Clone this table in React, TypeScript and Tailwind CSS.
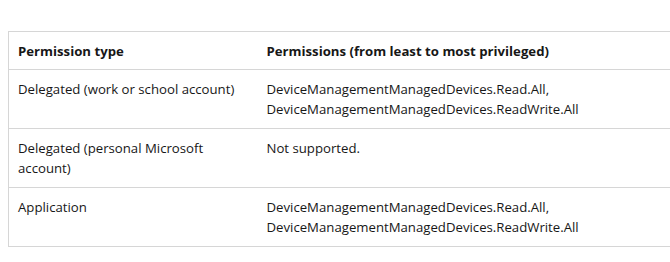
import React from "react";

const rows: [string, string[]][] = [
  ["Delegated (work or school account)", ["DeviceManagementManagedDevices.Read.All,", "DeviceManagementManagedDevices.ReadWrite.All"]],
  ["Delegated (personal Microsoft account)", ["Not supported."]],
  ["Application", ["DeviceManagementManagedDevices.Read.All,", "DeviceManagementManagedDevices.ReadWrite.All"]],
];

export default function App() {
  return (
    <div className="w-[670px] h-[262px] overflow-hidden bg-white pt-[31px] pl-2" style={{ fontFamily: '"Open Sans", sans-serif' }}>
      <table className="w-[700px] border-collapse text-[13.2px] leading-[20px] text-[#171717]">
        <thead>
          <tr className="border border-[#d6d6d6]">
            <th className="w-[249px] h-[38px] px-[9px] py-[8px] text-left font-bold">Permission type</th>
            <th className="h-[38px] px-[9px] py-[8px] text-left font-bold">Permissions (from least to most privileged)</th>
          </tr>
        </thead>
        <tbody>
          {rows.map(([type, perms]) => (
            <tr key={type} className="border border-[#d6d6d6]">
              <td className="h-[58px] px-[9px] pt-[9px] pb-[9px] align-top w-[249px]">{type}</td>
              <td className="h-[58px] px-[9px] pt-[9px] pb-[9px] align-top">
                {perms.map((p) => (
                  <div key={p}>{p}</div>
                ))}
              </td>
            </tr>
          ))}
        </tbody>
      </table>
    </div>
  );
}
